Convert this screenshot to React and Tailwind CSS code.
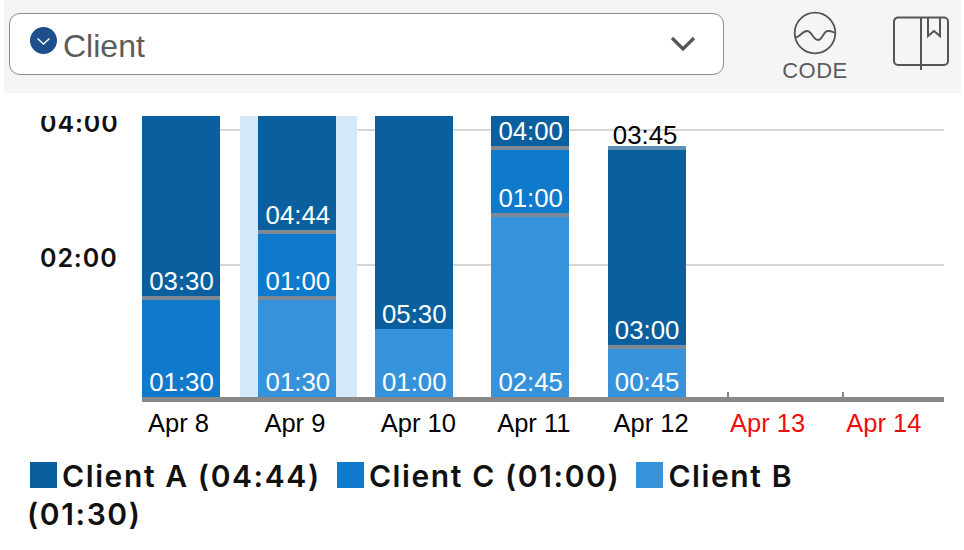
import { Fragment } from "react";

const DARK = "bg-[#0a609f]";
const MID = "bg-[#0f7acb]";
const LIGHT = "bg-[#3693db]";

// heights include the grey separator at the bottom of a segment
const days = [
  {
    label: "Apr 8",
    segments: [
      { h: 184, color: DARK, text: "03:30", sep: true },
      { h: 97, color: MID, text: "01:30" },
    ],
  },
  {
    label: "Apr 9",
    selected: true,
    segments: [
      { h: 118, color: DARK, text: "04:44", sep: true },
      { h: 66, color: MID, text: "01:00", sep: true },
      { h: 97, color: LIGHT, text: "01:30" },
    ],
  },
  {
    label: "Apr 10",
    segments: [
      { h: 213, color: DARK, text: "05:30" },
      { h: 68, color: LIGHT, text: "01:00" },
    ],
  },
  {
    label: "Apr 11",
    segments: [
      { h: 34, color: DARK, text: "04:00", sep: true },
      { h: 67, color: MID, text: "01:00", sep: true },
      { h: 180, color: LIGHT, text: "02:45" },
    ],
  },
  {
    label: "Apr 12",
    segments: [
      { h: 4, color: "bg-[#5f8fb5]", text: "03:45", black: true },
      { h: 199, color: DARK, text: "03:00", sep: true },
      { h: 48, color: LIGHT, text: "00:45" },
    ],
  },
  { label: "Apr 13", weekend: true, tick: "ml-[3px]" },
  { label: "Apr 14", weekend: true, tick: "ml-[2px]" },
];

const legend = [
  { name: "Client A (04:44)", color: DARK, gap: "ml-[3px]" },
  { name: "Client C (01:00)", color: MID, gap: "ml-[7px]" },
  { name: "Client B (01:30)", color: LIGHT, gap: "ml-[7px]" },
];

const Segment = ({ segment }) => (
  <div
    className={`flex items-end justify-center box-border whitespace-nowrap text-[25.8px] leading-[30px] ${segment.color} ${
      segment.sep ? "border-b-4 border-[#7d8a96]" : ""
    } ${segment.black ? "pr-[3px] text-black" : "pl-[1px] text-white"}`}
    style={{ height: segment.h }}
  >
    {segment.text}
  </div>
);

const Column = ({ day }) => (
  <div className="relative flex w-[78px] flex-col justify-end">
    {day.selected && <div className="absolute -left-[18px] -right-[21px] top-0 bottom-0 bg-[#d4e8f7]" />}
    {day.tick && <div className={`h-[5px] w-[2px] bg-[#888888] ${day.tick}`} />}
    <div className="relative flex flex-col">
      {day.segments?.map((segment) => (
        <Segment key={segment.text} segment={segment} />
      ))}
    </div>
  </div>
);

const App = () => {
  return (
    <div className="h-[550px] w-[964px] overflow-hidden bg-white font-['Liberation_Sans',Arial,sans-serif]">
      {/* Top bar */}
      <div className="ml-[4px] mr-[3px] flex h-[93px] bg-[#f5f5f5] pl-[5px] pt-[13px]">
        <div className="flex h-[62px] w-[715px] items-center rounded-[11px] border border-[#8c8c8c] bg-white pl-[20px] pr-[27px]">
          <svg width="27" height="27" viewBox="0 0 27 27" className="-mt-[7px] shrink-0">
            <circle cx="13.5" cy="13.5" r="13.5" fill="#1e4f8c" />
            <path d="M7.5 11.5l6 5.5 6-5.5" fill="none" stroke="#fff" strokeWidth="1.4" />
          </svg>
          <span className="ml-[6px] mt-[3px] text-[32px] leading-none text-[#5c5c5c]">Client</span>
          <svg width="26" height="16" viewBox="0 0 26 16" className="ml-auto shrink-0">
            <path d="M2 2l11 11L24 2" fill="none" stroke="#555" strokeWidth="3.2" />
          </svg>
        </div>
        <div className="ml-[56px] flex w-[70px] flex-col items-center">
          <svg width="44" height="44" viewBox="0 0 44 44" className="-mt-[2px] shrink-0">
            <circle cx="22" cy="22" r="20.3" fill="none" stroke="#555" strokeWidth="1.8" />
            <path
              d="M2 26.5C7 26.5 9 20 14 20S20 29 25 29 30 20 35 20 39 21 42 22"
              fill="none"
              stroke="#555"
              strokeWidth="1.8"
            />
          </svg>
          <span className="mt-[4px] text-[22px] leading-[24px] tracking-[0.5px] text-[#5c5c5c]">CODE</span>
        </div>
        <svg width="60" height="56" viewBox="0 0 60 56" className="ml-[42px] mt-[3px] shrink-0">
          <path
            d="M29 1.500H6a4 4 0 0 0-4 4v39.500a4 4 0 0 0 4 4h23M29 1.500H52a4 4 0 0 1 4 4v39.500a4 4 0 0 1-4 4H29M29 1.500v52.500"
            fill="none"
            stroke="#555"
            strokeWidth="2"
          />
          <path d="M36 1.500v18.500l6-5 6 5V1.500" fill="none" stroke="#555" strokeWidth="2" />
        </svg>
      </div>

      {/* Chart */}
      <div className="mt-[23px] flex">
        <div className="h-[281px] w-[142px] overflow-hidden pl-[40px] font-['Inter',sans-serif] text-[25px] font-semibold leading-[30px] tracking-[0.9px] text-[#111]">
          <div className="-mt-[8px]">04:00</div>
          <div className="mt-[105px]">02:00</div>
        </div>
        <div className="w-[802px]">
          <div className="relative h-[281px]">
            <div className="absolute left-0 right-0 top-[13px] h-[2px] bg-[#d6d6d6]" />
            <div className="absolute left-0 right-0 top-[148px] h-[2px] bg-[#d6d6d6]" />
            <div className="relative flex h-full gap-[38.4px]">
              {days.map((day) => (
                <Column key={day.label} day={day} />
              ))}
            </div>
          </div>
          <div className="h-[5px] bg-[#888888]" />
          <div className="mt-[6px] flex gap-[38.4px]">
            {days.map((day) => (
              <div
                key={day.label}
                className={`w-[78px] whitespace-nowrap pl-[6px] text-[25.5px] leading-[30px] ${
                  day.weekend ? "text-[#f00d0d]" : "text-black"
                }`}
              >
                {day.label}
              </div>
            ))}
          </div>
        </div>
      </div>

      {/* Legend */}
      <p className="mt-[19px] pl-[27px] pr-[140px] font-['Inter',sans-serif] text-[30px] font-semibold leading-[38px] tracking-[1.6px] text-[#111]">
        {legend.map((item) => (
          <Fragment key={item.name}>
            <span className={`mr-[5px] inline-block h-[26px] w-[27px] align-[-1px] ${item.gap} ${item.color}`} />
            {item.name}{" "}
          </Fragment>
        ))}
      </p>
    </div>
  );
};

export default App;
